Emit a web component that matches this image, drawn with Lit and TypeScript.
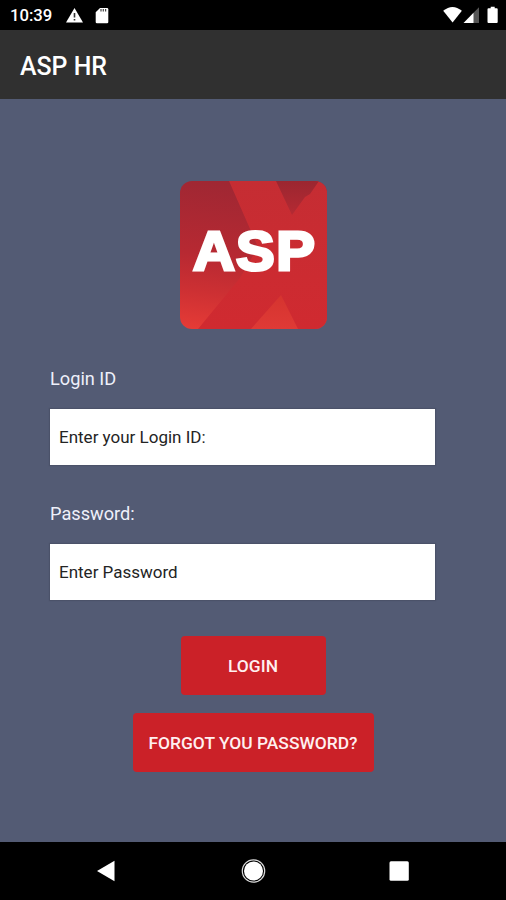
import { LitElement, html, css } from "lit";
import { customElement, property } from "lit/decorators.js";

@customElement("status-bar")
class StatusBar extends LitElement {
  static styles = css`
    :host { display: flex; align-items: flex-start; height: 30px; background: #000; color: #fff; }
    .time { width: 54px; padding-left: 10px; font: 500 16.700px/31px Roboto, sans-serif; }
    svg { display: block; }
    .right { margin-left: auto; }
  `;
  render() {
    return html`
      <div class="time">10:39</div>
      <svg width="50" height="30" viewBox="64 0 50 30">
        <path fill="#fff" d="M74.500 8 L83 22.400 H66Z" />
        <path stroke="#333" stroke-width="1.600" d="M74.500 13V17.500M74.500 19V20.600" />
        <path fill="#fff" d="M100 8 H107 Q108.300 8 108.300 9.300 V22 Q108.300 23.300 107 23.300 H97 Q95.700 23.300 95.700 22 V12.300Z" />
        <path stroke="#444" stroke-width="1.200" d="M101 9V11.500M103.300 9V11.500M105.600 9V11.500" />
      </svg>
      <svg class="right" width="66" height="30" viewBox="440 0 66 30">
        <path fill="#fff" d="M443.200 10.800 Q452.500 3.200 461.900 10.800 L452.600 22.500Z" />
        <path fill="#555" d="M479 7.300V23H473V13.300Z" />
        <path fill="#fff" d="M473.500 12.800V23H463.500Z" />
        <path fill="#fff" d="M488.500 8.200H490.700V6.700H494.700V8.200H496.700Q497.700 8.200 497.700 9.200V22Q497.700 23 496.700 23H488.500Q487.500 23 487.500 22V9.200Q487.500 8.200 488.500 8.200Z" />
      </svg>
    `;
  }
}

@customElement("brand-logo")
class BrandLogo extends LitElement {
  static styles = css`
    :host { display: block; width: 147px; height: 148px; margin-left: 1px; border-radius: 12px; overflow: hidden; }
    svg { display: block; }
    text { font: 700 55.200px "Liberation Sans", Arial, sans-serif; fill: #fff; stroke: #fff; stroke-width: 3; }
  `;
  render() {
    return html`
      <svg width="147" height="148" viewBox="0 0 147 148">
        <defs>
          <linearGradient id="base" x1="0.25" y1="0" x2="0.12" y2="1">
            <stop offset="0" stop-color="#9f2733" />
            <stop offset="0.5" stop-color="#b72932" />
            <stop offset="0.75" stop-color="#cd3033" />
            <stop offset="1" stop-color="#e53b36" />
          </linearGradient>
          <linearGradient id="band" x1="0" y1="0" x2="0" y2="1">
            <stop offset="0" stop-color="#c52d33" />
            <stop offset="1" stop-color="#d02a30" />
          </linearGradient>
          <linearGradient id="notch" x1="0" y1="0" x2="0" y2="1">
            <stop offset="0" stop-color="#9b2630" />
            <stop offset="1" stop-color="#b52a33" />
          </linearGradient>
          <linearGradient id="foot" x1="0" y1="0" x2="0" y2="1">
            <stop offset="0" stop-color="#d5342f" />
            <stop offset="1" stop-color="#df3a36" />
          </linearGradient>
        </defs>
        <rect width="147" height="148" fill="url(#base)" />
        <path fill="url(#band)" d="M49 0H147V148H18L60 97L78 66Z" />
        <path fill="url(#notch)" d="M96 0H139L130 13L125 16L112 34Z" />
        <path fill="url(#foot)" d="M101 114L118 148H71Z" />
        <text transform="scale(1.05 1)" x="12.300 53.300 91.700" y="89">ASP</text>
      </svg>
    `;
  }
}

@customElement("form-field")
class FormField extends LitElement {
  @property() label = "";
  @property() hint = "";
  static styles = css`
    :host { display: block; font-family: Roboto, sans-serif; }
    label { display: block; height: 41px; margin-top: -1px; font-size: 18.200px; line-height: 21px; color: #eef0fa; }
    input {
      display: block; box-sizing: border-box; width: 385px; height: 56px; padding: 0 9px 1px;
      border: 0; border-radius: 0; background: #fff; box-shadow: 0 0 1px 1px #4b5269;
      font: 400 17px Roboto, sans-serif; outline: 0;
    }
    input::placeholder { color: #242424; opacity: 1; }
  `;
  render() {
    return html`<label for="f">${this.label}</label><input id="f" placeholder=${this.hint} />`;
  }
}

@customElement("nav-bar")
class NavBar extends LitElement {
  static styles = css`
    :host { display: block; height: 58px; background: #000; }
    svg { display: block; }
  `;
  render() {
    return html`
      <svg width="506" height="58" viewBox="0 842 506 58" fill="#fff">
        <path d="M97 871 L114.500 860.700V881.300Z" />
        <circle cx="253.500" cy="871" r="11.200" fill="none" stroke="#ddd" stroke-width="1.200" />
        <circle cx="253.500" cy="871" r="9.500" />
        <rect x="389.500" y="861.300" width="19.300" height="19.500" rx="1.500" />
      </svg>
    `;
  }
}

@customElement("app-root")
class AppRoot extends LitElement {
  static styles = css`
    :host { display: flex; flex-direction: column; width: 506px; height: 900px; overflow: hidden; background: #535b74; font-family: Roboto, sans-serif; }
    header { height: 69px; box-sizing: border-box; padding-left: 20px; background: #303030; color: #fff; font-size: 24.900px; font-weight: 500; line-height: 73px; }
    main { flex: 1; display: flex; flex-direction: column; align-items: center; padding-top: 82px; }
    .fields { align-self: flex-start; display: flex; flex-direction: column; gap: 39px; margin: 40px 0 36px 50px; }
    button { height: 59px; padding: 1px 0 0; border: 0; border-radius: 4px; background: #cb2128; color: #fff0f0; font: 500 17.400px Roboto, sans-serif; }
    .login { width: 145px; }
    .forgot { width: 241px; margin-top: 18px; }
  `;
  render() {
    return html`
      <status-bar></status-bar>
      <header>ASP HR</header>
      <main>
        <brand-logo></brand-logo>
        <div class="fields">
          <form-field label="Login ID" hint="Enter your Login ID:"></form-field>
          <form-field label="Password:" hint="Enter Password"></form-field>
        </div>
        <button class="login">LOGIN</button>
        <button class="forgot">FORGOT YOU PASSWORD?</button>
      </main>
      <nav-bar></nav-bar>
    `;
  }
}
